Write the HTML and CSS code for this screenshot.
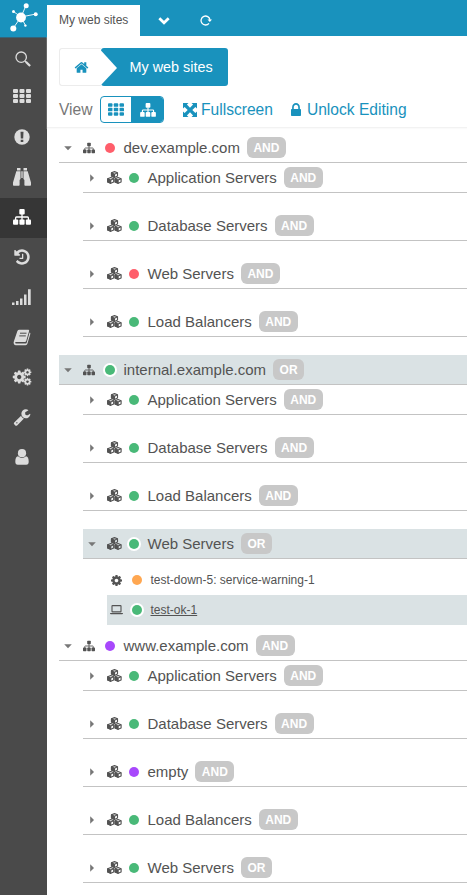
FILE: index.html
```html
<!DOCTYPE html>
<html lang="en">
<head>
<meta charset="utf-8">
<title>My web sites</title>
<link rel="stylesheet" href="styles.css">
</head>
<body>
<svg class="defs" width="0" height="0" aria-hidden="true">
  <symbol id="grid" viewBox="0 0 18 14"><g fill="currentColor"><rect width="5" height="4" rx="1"/><rect x="6.5" width="5" height="4" rx="1"/><rect x="13" width="5" height="4" rx="1"/><rect y="5" width="5" height="4" rx="1"/><rect x="6.5" y="5" width="5" height="4" rx="1"/><rect x="13" y="5" width="5" height="4" rx="1"/><rect y="10" width="5" height="4" rx="1"/><rect x="6.5" y="10" width="5" height="4" rx="1"/><rect x="13" y="10" width="5" height="4" rx="1"/></g></symbol>
  <symbol id="sitemap" viewBox="0 0 18 16"><g fill="currentColor"><rect x="6.3" width="5.4" height="5.4" rx="1"/><rect y="10.4" width="5.2" height="5.4" rx="1"/><rect x="6.4" y="10.4" width="5.2" height="5.4" rx="1"/><rect x="12.8" y="10.4" width="5.2" height="5.4" rx="1"/></g><path d="M9 5v6M2.6 11V8.9q0-.9.9-.9h11q.9 0 .9.9V11" fill="none" stroke="currentColor" stroke-width="1.3"/></symbol>
  <symbol id="cubes" viewBox="0 0 15 13"><g id="cube" fill="none" stroke="currentColor" stroke-linejoin="round" stroke-width="1.15"><path d="M7.5.6 10.5 1.8V5L7.5 6.4 4.5 5V1.8z"/><path fill="currentColor" d="M4.5 1.9 7.5 3.2V6.4L4.5 5z"/><path d="M7.5 3.2 10.5 1.8"/></g><use href="#cube" x="-3.8" y="5.9"/><use href="#cube" x="3.6" y="5.9"/></symbol>
  <symbol id="gear" viewBox="0 0 1792 1792"><path fill="currentColor" d="M1152 896q0-106-75-181t-181-75-181 75-75 181 75 181 181 75 181-75 75-181zm512-109v222q0 12-8 23t-20 13l-185 28q-19 54-39 91 35 50 107 138 10 12 10 25t-9 23q-27 37-99 108t-94 71q-12 0-26-9l-138-108q-44 23-91 38-16 136-29 186-7 28-36 28h-222q-14 0-24.5-8.5t-11.5-21.5l-28-184q-49-16-90-37l-141 107q-10 9-25 9-14 0-25-11-126-114-165-168-7-10-7-23 0-12 8-23 15-21 51-66.5t54-70.5q-27-50-41-99l-183-27q-13-2-21-12.5t-8-23.5v-222q0-12 8-23t19-13l186-28q14-46 39-92-40-57-107-138-10-12-10-24 0-10 9-23 26-36 98.5-107.5t94.5-71.5q13 0 26 10l138 107q44-23 91-38 16-136 29-186 7-28 36-28h222q14 0 24.5 8.5t11.5 21.5l28 184q49 16 90 37l142-107q9-9 24-9 13 0 25 10 129 119 165 170 7 8 7 22 0 12-8 23-15 21-51 66.5t-54 70.5q26 50 41 98l183 28q13 2 21 12.5t8 23.5z"/></symbol>
  <symbol id="down" viewBox="0 0 8 8"><path fill="currentColor" d="M.2 2.3h7.6L4 6.2z"/></symbol>
  <symbol id="right" viewBox="0 0 8 8"><path fill="currentColor" d="M2.2.2v7.6L6 4z"/></symbol>
</svg>
<div class="app">
  <nav class="sidebar">
    <a class="logo"><svg width="28" height="30" viewBox="0 0 28 30"><g stroke="#fff" stroke-width=".9"><path d="M11 15 16 3.500M11 15 26 12M11 15 3.500 9.500M11 15 3 26.500M11 15 15.500 23.500"/></g><g fill="#fff"><circle cx="11" cy="15.500" r="4.900"/><circle cx="16.200" cy="3.800" r="2.500"/><circle cx="25.700" cy="12.200" r="2"/><circle cx="3.500" cy="9.500" r="1.500"/><circle cx="3.300" cy="26.500" r="3"/><circle cx="15.400" cy="23.600" r="1.200"/></g></svg></a>
    <a class="find"><svg width="16" height="16" viewBox="0 0 16 16"><circle cx="6.200" cy="6.200" r="5.200" fill="none" stroke="currentColor" stroke-width="1.300"/><path d="M9.900 9.900 11 11" stroke="currentColor"/><path d="m10.800 10.800 4.300 4.200" stroke="currentColor" stroke-width="2.300"/></svg></a>
    <a class="raised"><svg width="18" height="14"><use href="#grid"/></svg></a>
    <a><svg width="16" height="16" viewBox="0 0 16 16"><circle cx="8" cy="8" r="7.700" fill="currentColor"/><path d="M6.500 2.700h3l-.3 6.700H6.800zM6.700 10.700h2.600v2.400H6.700z" fill="#4a4a4a"/></svg></a>
    <a><svg width="18" height="18" viewBox="0 0 18 18"><g fill="currentColor"><path d="M4 0h3.500v2.500H4zM10.500 0H14v2.500h-3.500zM3.300 3.300H7.500V11L6.600 12v5q0 .8-.8.800H.8q-.8 0-.8-.8v-2.500zM14.700 3.300H10.500V11l.9 1v5q0 .8.8.800h5q.8 0 .8-.8v-2.500z"/><path opacity=".75" d="M8.100 3.300h1.800v6.600H8.100z"/></g></svg></a>
    <a class="active"><svg width="18" height="16"><use href="#sitemap"/></svg></a>
    <a><svg width="18" height="18" viewBox="0 0 1792 1792"><path fill="currentColor" d="M1664 896q0 156-61 298t-164 245-245 164-298 61q-172 0-327-72.500t-264-204.500q-7-10-6.500-22.500t8.500-20.500l137-138q10-9 25-9 16 2 23 12 73 95 179 147t225 52q104 0 198.500-40.500t163.500-109.500 109.500-163.500 40.500-198.500-40.500-198.500-109.500-163.500-163.500-109.500-198.500-40.500q-98 0-188 35.500t-160 101.500l137 138q31 30 14 69-17 40-59 40h-448q-26 0-45-19t-19-45v-448q0-42 40-59 39-17 69 14l130 129q107-101 244.500-156.500t284.500-55.500q156 0 298 61t245 164 164 245 61 298zm-640-288v448q0 14-9 23t-23 9h-320q-14 0-23-9t-9-23v-64q0-14 9-23t23-9h224v-352q0-14 9-23t23-9h64q14 0 23 9t9 23z"/></svg></a>
    <a><svg width="19" height="16" viewBox="0 0 19 16"><path fill="currentColor" d="M0 13.500h2.500V16H0zM4 12h2.500v4H4zM8 9.500h2.500V16H8zM12 5.500h2.500V16H12zM16 .3h2.700V16H16z"/></svg></a>
    <a><svg width="18" height="17" viewBox="0 0 18 17"><path fill="currentColor" d="M6.400.8h8.900q1.100 0 .8 1.200l-2.900 10q-.3 1-1.300 1H3q-.9 0-.9.700t1 .7h9.800q.6 0 .8-.6L16.600 3.500q1.100.4.700 1.600l-2.900 9.700q-.4 1.400-1.800 1.400H3q-1.600 0-2.200-1.500-.5-1.200.2-2.800L4.400 2.100Q4.900.8 6.400.8z"/><path stroke="#4a4a4a" d="M7 4.200h6.500M6.300 6.900h6.500"/></svg></a>
    <a><svg width="20" height="18" viewBox="0 0 20 18"><use href="#gear" x="-.3" y="1.500" width="15" height="15"/><use href="#gear" x="11" y="-.2" width="9" height="9"/><use href="#gear" x="11" y="9.200" width="9" height="9"/></svg></a>
    <a><svg width="18" height="18" viewBox="0 0 1792 1792"><path fill="currentColor" d="M448 1472q0-26-19-45t-45-19-45 19-19 45 19 45 45 19 45-19 19-45zm644-420l-682 682q-37 37-90 37-52 0-91-37l-106-108q-38-36-38-90 0-53 38-91l681-681q39 98 114.500 173.500t173.500 114.500zm634-435q0 39-23 106-47 134-164.500 217.500t-258.500 83.500q-185 0-316.500-131.500t-131.500-316.500 131.500-316.500 316.500-131.500q58 0 121.500 16.500t107.500 46.500q16 11 16 28t-16 28l-293 169v224l193 107q5-3 79-48.500t135.500-81 70.500-35.500q15 0 23.500 10t8.500 25z"/></svg></a>
    <a><svg width="14" height="16" viewBox="0 0 14 16"><g fill="currentColor"><circle cx="7" cy="4.200" r="4.100"/><path d="M3 7.200Q7 10.700 11 7.200q2.700.4 2.700 5.300 0 3.300-2.500 3.300H2.800Q.3 15.800.3 12.500.3 7.600 3 7.200z"/></g></svg></a>
  </nav>
  <main class="main">
    <header class="tabs">
      <a class="tab">My web sites</a>
      <svg class="chevron" width="12" height="8" viewBox="0 0 12 8"><path d="m1.300 1.300 4.700 4.500 4.700-4.500" fill="none" stroke="#fff" stroke-width="2.700"/></svg>
      <svg class="refresh" width="12" height="12" viewBox="0 0 12 12"><path d="M9 9.400A4.500 4.500 0 1 1 10 5.800" fill="none" stroke="#fff" stroke-width="1.300"/><path fill="#fff" d="M7.500 5.500H12L9.800 8z"/></svg>
    </header>
    <div class="controls">
      <div class="crumbs">
        <a class="home"><svg width="15" height="15" viewBox="0 0 1792 1792"><path fill="currentColor" d="M1472 992v480q0 26-19 45t-45 19h-384v-384h-256v384h-384q-26 0-45-19t-19-45v-480q0-1 .5-3t.5-3l575-474 575 474q1 2 1 6zm223-69l-62 74q-8 9-21 11h-3q-13 0-21-7l-692-577-692 577q-12 8-24 7-13-2-21-11l-62-74q-8-10-7-23.500t11-21.500l719-599q32-26 76-26t76 26l244 204v-195q0-14 9-23t23-9h192q14 0 23 9t9 23v408l219 182q10 8 11 21.500t-7 23.500z"/></svg></a>
        <a class="crumb"><svg class="arrow" width="16" height="38" viewBox="0 0 16 38"><path fill="#fff" d="M0 2.500 16 20 0 37z"/></svg>My web sites</a>
      </div>
      <div class="viewbar">
        <span class="label">View</span>
        <div class="switch"><a><svg width="16" height="13"><use href="#grid"/></svg></a><a class="on"><svg width="16" height="14"><use href="#sitemap"/></svg></a></div>
        <a class="action full"><svg width="14" height="14" viewBox="0 0 14 14"><path fill="currentColor" d="M0 0h5.500L3.900 1.600 7 4.700l3.100-3.100L8.500 0H14v5.500l-1.600-1.600L9.300 7l3.100 3.100L14 8.500V14H8.500l1.600-1.600L7 9.300l-3.100 3.100L5.500 14H0V8.500l1.600 1.600L4.700 7 1.600 3.900 0 5.500z"/></svg>Fullscreen</a>
        <a class="action lock"><svg width="10" height="13" viewBox="320 128 1152 1408" preserveAspectRatio="none"><path fill="currentColor" d="M640 768h512v-192q0-106-75-181t-181-75-181 75-75 181v192zm832 96v576q0 40-28 68t-68 28h-960q-40 0-68-28t-28-68v-576q0-40 28-68t68-28h32v-192q0-184 132-316t316-132 316 132 132 316v192h32q40 0 68 28t28 68z"/></svg>Unlock Editing</a>
      </div>
    </div>
    <div class="tree">
      <section>
        <div class="row root"><svg class="caret"><use href="#down"/></svg><svg class="icon"><use href="#sitemap"/></svg><i class="dot red"></i><span>dev.example.com</span><b>AND</b></div>
        <div class="children">
          <div class="row"><svg class="caret"><use href="#right"/></svg><svg class="icon"><use href="#cubes"/></svg><i class="dot"></i><span>Application Servers</span><b>AND</b></div>
          <div class="row"><svg class="caret"><use href="#right"/></svg><svg class="icon"><use href="#cubes"/></svg><i class="dot"></i><span>Database Servers</span><b>AND</b></div>
          <div class="row"><svg class="caret"><use href="#right"/></svg><svg class="icon"><use href="#cubes"/></svg><i class="dot red"></i><span>Web Servers</span><b>AND</b></div>
          <div class="row"><svg class="caret"><use href="#right"/></svg><svg class="icon"><use href="#cubes"/></svg><i class="dot"></i><span>Load Balancers</span><b>AND</b></div>
        </div>
      </section>
      <section>
        <div class="row root selected"><svg class="caret"><use href="#down"/></svg><svg class="icon"><use href="#sitemap"/></svg><i class="dot"></i><span>internal.example.com</span><b>OR</b></div>
        <div class="children">
          <div class="row"><svg class="caret"><use href="#right"/></svg><svg class="icon"><use href="#cubes"/></svg><i class="dot"></i><span>Application Servers</span><b>AND</b></div>
          <div class="row"><svg class="caret"><use href="#right"/></svg><svg class="icon"><use href="#cubes"/></svg><i class="dot"></i><span>Database Servers</span><b>AND</b></div>
          <div class="row"><svg class="caret"><use href="#right"/></svg><svg class="icon"><use href="#cubes"/></svg><i class="dot"></i><span>Load Balancers</span><b>AND</b></div>
          <div class="row selected"><svg class="caret"><use href="#down"/></svg><svg class="icon"><use href="#cubes"/></svg><i class="dot"></i><span>Web Servers</span><b>OR</b></div>
        </div>
        <div class="leaves">
          <div class="leaf"><svg width="11" height="11" viewBox="128 128 1536 1536"><use href="#gear" width="1792" height="1792"/></svg><i class="dot orange"></i><span>test-down-5: service-warning-1</span></div>
          <div class="leaf selected"><svg width="13" height="10" viewBox="0 0 13 10"><path d="M2.500.6h8q.5 0 .5.500v5.300q0 .5-.5.500h-8Q2 6.900 2 6.400V1.100q0-.5.5-.5z" fill="none" stroke="currentColor" stroke-width="1.100"/><path fill="currentColor" d="M0 8h13q0 1.200-1 1.200H1Q0 9.200 0 8z"/></svg><i class="dot"></i><u>test-ok-1</u></div>
        </div>
      </section>
      <section>
        <div class="row root"><svg class="caret"><use href="#down"/></svg><svg class="icon"><use href="#sitemap"/></svg><i class="dot purple"></i><span>www.example.com</span><b>AND</b></div>
        <div class="children">
          <div class="row"><svg class="caret"><use href="#right"/></svg><svg class="icon"><use href="#cubes"/></svg><i class="dot"></i><span>Application Servers</span><b>AND</b></div>
          <div class="row"><svg class="caret"><use href="#right"/></svg><svg class="icon"><use href="#cubes"/></svg><i class="dot"></i><span>Database Servers</span><b>AND</b></div>
          <div class="row"><svg class="caret"><use href="#right"/></svg><svg class="icon"><use href="#cubes"/></svg><i class="dot purple"></i><span>empty</span><b>AND</b></div>
          <div class="row"><svg class="caret"><use href="#right"/></svg><svg class="icon"><use href="#cubes"/></svg><i class="dot"></i><span>Load Balancers</span><b>AND</b></div>
          <div class="row"><svg class="caret"><use href="#right"/></svg><svg class="icon"><use href="#cubes"/></svg><i class="dot"></i><span>Web Servers</span><b>OR</b></div>
        </div>
      </section>
    </div>
  </main>
</div>
</body>
</html>
```
FILE: styles.css
```css
* { box-sizing: border-box; }
body { margin: 0; background: #fff; color: #535353; font-family: "Liberation Sans", Arial, sans-serif; font-size: 15px; }
.defs { display: block; }
svg { flex: none; }
.app { display: flex; height: 895px; overflow: hidden; }
.sidebar { width: 47px; flex: none; background: #4a4a4a; color: #dcdcdc; }
.sidebar a { display: flex; height: 40px; align-items: center; justify-content: center; padding: 0 4px 2px 0; }
.sidebar .logo { height: 38px; background: #1992bd; padding: 0 0 3px; border-bottom: 1px solid #35647a; }
.sidebar .find { padding: 1px 2px 0 0; }
.sidebar .raised { padding-bottom: 4px; }
.sidebar .active { background: #363636; color: #fff; }
.main { flex: 1; min-width: 0; }
.tabs { display: flex; height: 36px; background: #1992bd; padding-top: 5px; }
.tab { width: 93px; background: #fff; font-size: 12px; line-height: 30px; padding-left: 12px; white-space: nowrap; }
.chevron { margin: 12px 0 0 18px; }
.refresh { margin: 9px 0 0 30px; }
.controls { height: 92px; padding: 12px 0 0 12px; border-bottom: 1px solid #f2f2f2; box-shadow: 0 1px 1px #fafafa; }
.crumbs { display: flex; height: 38px; width: 169px; }
.home { display: flex; align-items: center; width: 42px; padding-left: 14px; color: #1992bd; border: 1px solid #ececec; border-right: 0; border-radius: 3px 0 0 3px; }
.crumb { display: flex; flex: 1; align-items: center; background: #1992bd; color: #fff; border-radius: 3px; white-space: nowrap; font-size: 14.4px; }
.arrow { margin-right: 12.5px; }
.viewbar { display: flex; height: 27px; margin-top: 10px; align-items: center; font-size: 15.6px; }
.label { width: 41px; color: #777; }
.switch { display: flex; width: 64px; height: 27px; border: 1px solid #1992bd; border-radius: 4px; overflow: hidden; color: #1992bd; }
.switch a { display: flex; width: 31px; align-items: center; justify-content: center; }
.switch .on { background: #1992bd; color: #fff; padding-left: 2px; width: 32px; }
.action { display: flex; align-items: center; color: #1992bd; white-space: nowrap; }
.full { margin-left: 19px; gap: 4px; }
.lock { margin-left: 18px; gap: 6px; }
.tree { padding: 5px 0 0 12px; }
.row { display: flex; height: 30px; align-items: center; border-bottom: 1px solid #c3c3c3; white-space: nowrap; }
.children { margin-left: 24px; }
.children .row { margin-bottom: 18px; }
.selected { background: #dae2e4; }
.caret { width: 8px; height: 8px; margin-left: 5px; color: #777; }
.icon { width: 15px; height: 13px; margin-left: 11px; }
.root .icon { width: 12px; height: 12px; }
.root .dot { margin-left: 10px; }
.dot { width: 10px; height: 10px; border-radius: 50%; background: #49b978; flex: none; margin: 0 8.5px 0 7px; }
.red { background: #ff5e6b; }
.orange { background: #ffa751; }
.purple { background: #a848fc; }
.selected .dot { box-shadow: 0 0 0 2px #fff; }
.row b { height: 21px; line-height: 22px; padding: 0 6.500px; margin-left: 7px; border-radius: 6px; background: #c8c8c8; color: #fff; font-size: 12px; }
.leaves { margin: -12px 0 6px 48px; }
.leaf { display: flex; align-items: center; height: 30px; padding-left: 3px; font-size: 12px; white-space: nowrap; }
.leaf svg { width: 13px; }
.leaf .dot { margin-left: 9px; }
```
